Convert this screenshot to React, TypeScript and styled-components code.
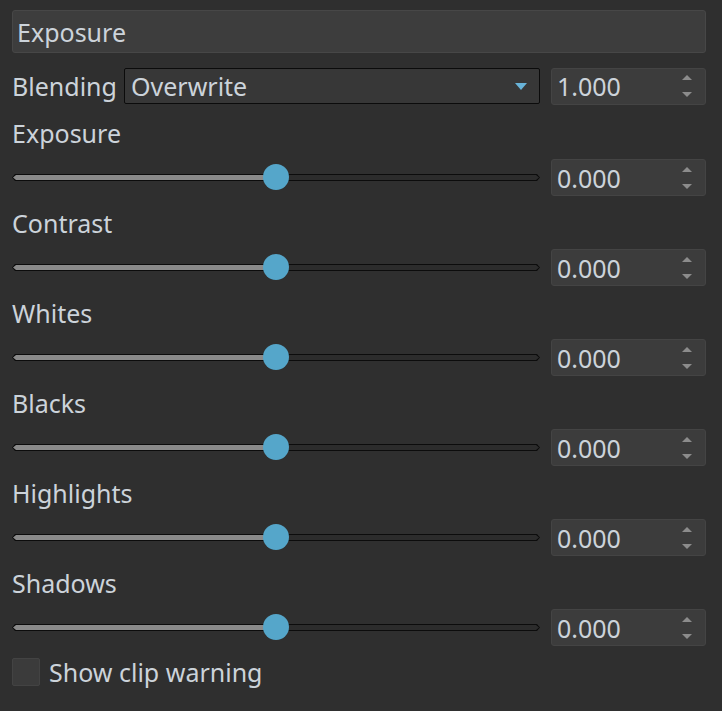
import React from "react";
import styled, { createGlobalStyle } from "styled-components";

const Global = createGlobalStyle`
  html, body {
    margin: 0;
    padding: 0;
    background: #2f2f2f;
  }
  body {
    font-family: "Noto Sans", "Open Sans", sans-serif;
    color: #ccd3da;
  }
`;

const Panel = styled.div`
  width: 722px;
  height: 711px;
  box-sizing: border-box;
  padding: 10px 16px 0 12px;
  display: flex;
  flex-direction: column;
  font-size: 25px;
`;

const Header = styled.div`
  height: 43px;
  box-sizing: border-box;
  background: #3d3d3d;
  border: 1px solid #474747;
  border-radius: 3px;
  display: flex;
  align-items: center;
  padding-left: 4px;
`;

const BlendRow = styled.div`
  margin-top: 15px;
  height: 36px;
  display: flex;
  align-items: center;
`;

const BlendLabel = styled.span`
  width: 112px;
  flex: none;
`;

const Combo = styled.div`
  width: 416px;
  height: 36px;
  box-sizing: border-box;
  border: 1px solid #0b0b0b;
  border-radius: 2px;
  background: #373737;
  display: flex;
  align-items: center;
  justify-content: space-between;
  padding: 0 12px 0 6px;
  margin-right: 11px;
`;

const ComboArrow = styled.span`
  width: 0;
  height: 0;
  border-left: 6px solid transparent;
  border-right: 6px solid transparent;
  border-top: 7px solid #68b3d8;
`;

const Spin = styled.div`
  width: 155px;
  height: 37px;
  flex: none;
  box-sizing: border-box;
  background: #3c3c3c;
  border: 1px solid #444444;
  border-radius: 3px;
  display: flex;
  align-items: center;
  justify-content: space-between;
  padding: 0 13px 0 5px;
`;

const SpinArrows = styled.span`
  display: flex;
  flex-direction: column;
  gap: 12px;
`;

const Arrow = styled.span<{ $up?: boolean }>`
  width: 0;
  height: 0;
  border-left: 5px solid transparent;
  border-right: 5px solid transparent;
  ${(p) =>
    p.$up ? "border-bottom: 5px solid #8c8c8c;" : "border-top: 5px solid #8c8c8c;"}
`;

const Sections = styled.div`
  padding-top: 2px;
  display: flex;
  flex-direction: column;
`;

const Section = styled.div`
  display: flex;
  flex-direction: column;
`;

const SectionLabel = styled.div`
  height: 53px;
  display: flex;
  align-items: center;
`;

const ControlRow = styled.div`
  height: 37px;
  display: flex;
  align-items: center;
  gap: 11px;
`;

const SliderBox = styled.div`
  position: relative;
  width: 528px;
  height: 37px;
  display: flex;
  align-items: center;
`;

const pointed =
  "polygon(3px 0, calc(100% - 3px) 0, 100% 50%, calc(100% - 3px) 100%, 3px 100%, 0 50%)";

const Track = styled.div`
  width: 100%;
  height: 7px;
  box-sizing: border-box;
  padding: 1px;
  background: #0c0c0c;
  clip-path: ${pointed};
  display: flex;
`;

const TrackInner = styled.div`
  flex: 1;
  display: flex;
  clip-path: ${pointed};
`;

const Filled = styled.div`
  background: #8a8a8a;
`;

const Rest = styled.div`
  flex: 1;
  background: #2c2c2c;
`;

const Thumb = styled.div`
  position: absolute;
  top: 50%;
  width: 26px;
  height: 26px;
  margin: -14px 0 0 -13px;
  border-radius: 50%;
  background: #55a6ca;
`;

const CheckRow = styled.label`
  margin-top: 12px;
  height: 28px;
  display: flex;
  align-items: center;
  gap: 9px;
`;

const Box = styled.span`
  width: 28px;
  height: 28px;
  box-sizing: border-box;
  background: #3b3b3b;
  border: 1px solid #434343;
  border-radius: 2px;
`;

const SpinBox = ({ value }: { value: string }) => (
  <Spin>
    <span>{value}</span>
    <SpinArrows>
      <Arrow $up />
      <Arrow />
    </SpinArrows>
  </Spin>
);

const Slider = ({ value }: { value: number }) => (
  <SliderBox>
    <Track>
      <TrackInner>
        <Filled style={{ width: `${value * 100}%` }} />
        <Rest />
      </TrackInner>
    </Track>
    <Thumb style={{ left: `${value * 100}%` }} />
  </SliderBox>
);

const params = ["Exposure", "Contrast", "Whites", "Blacks", "Highlights", "Shadows"];

export default function App() {
  return (
    <>
      <Global />
      <Panel>
        <Header>Exposure</Header>
        <BlendRow>
          <BlendLabel>Blending</BlendLabel>
          <Combo>
            <span>Overwrite</span>
            <ComboArrow />
          </Combo>
          <SpinBox value="1.000" />
        </BlendRow>
        <Sections>
          {params.map((name) => (
            <Section key={name}>
              <SectionLabel>{name}</SectionLabel>
              <ControlRow>
                <Slider value={0.5} />
                <SpinBox value="0.000" />
              </ControlRow>
            </Section>
          ))}
        </Sections>
        <CheckRow>
          <Box />
          <span>Show clip warning</span>
        </CheckRow>
      </Panel>
    </>
  );
}
